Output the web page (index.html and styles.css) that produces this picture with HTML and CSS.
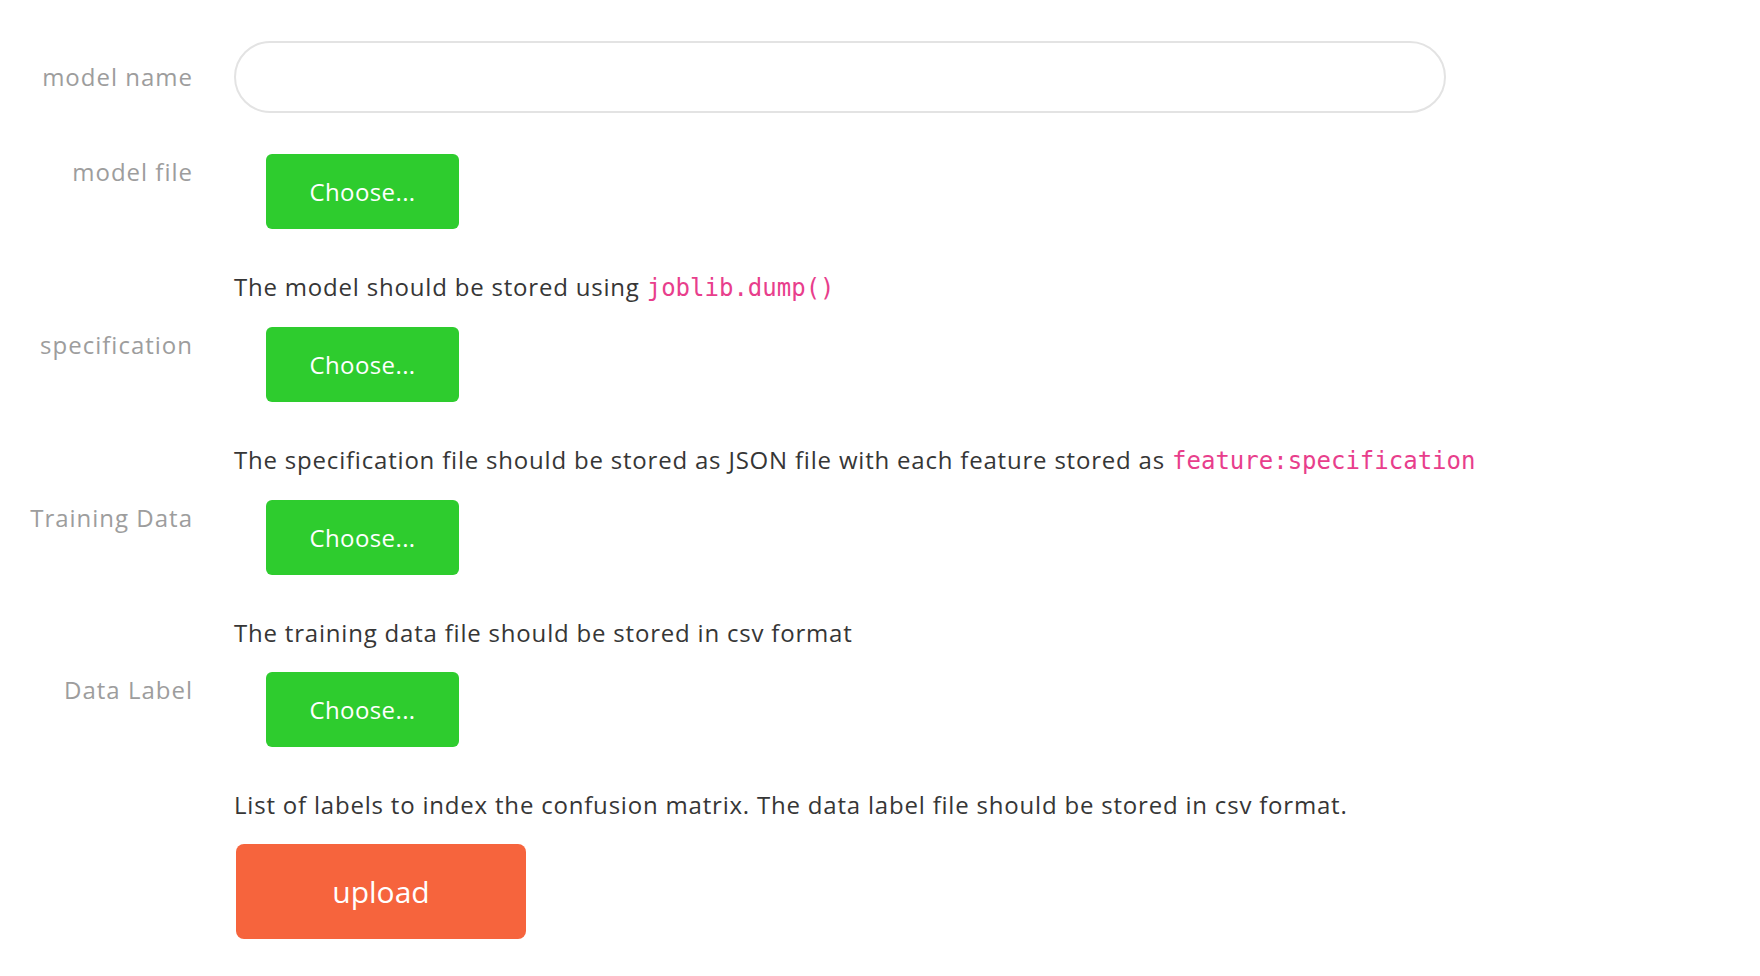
FILE: index.html
```html
<!DOCTYPE html>
<html lang="en">
<head>
<meta charset="utf-8">
<title>Upload model</title>
<link rel="stylesheet" href="styles.css">
</head>
<body>
<form class="form">
  <div class="field field-first">
    <div class="field-label label-center">model name</div>
    <div class="field-body">
      <input class="text-input" type="text">
    </div>
  </div>

  <div class="field">
    <div class="field-label">model file</div>
    <div class="field-body">
      <label class="file-btn"><input class="file-input" type="file">Choose...</label>
      <p class="help">The model should be stored using <code>joblib.dump()</code></p>
    </div>
  </div>

  <div class="field">
    <div class="field-label">specification</div>
    <div class="field-body">
      <label class="file-btn"><input class="file-input" type="file">Choose...</label>
      <p class="help">The specification file should be stored as JSON file with each feature stored as <code>feature:specification</code></p>
    </div>
  </div>

  <div class="field">
    <div class="field-label">Training Data</div>
    <div class="field-body">
      <label class="file-btn"><input class="file-input" type="file">Choose...</label>
      <p class="help">The training data file should be stored in csv format</p>
    </div>
  </div>

  <div class="field">
    <div class="field-label">Data Label</div>
    <div class="field-body">
      <label class="file-btn"><input class="file-input" type="file">Choose...</label>
      <p class="help">List of labels to index the confusion matrix. The data label file should be stored in csv format.</p>
    </div>
  </div>

  <div class="field">
    <div class="field-label"></div>
    <div class="field-body">
      <button class="upload-btn" type="button">upload</button>
    </div>
  </div>
</form>
</body>
</html>
```

FILE: styles.css
```css
* { box-sizing: border-box; }

html, body {
  margin: 0;
  padding: 0;
  background: #ffffff;
}

body {
  font-family: "Open Sans", "Liberation Sans", sans-serif;
  font-size: 24px;
  color: #363636;
}

.form {
  padding-top: 41px;
}

.field {
  display: flex;
  gap: 41px;
  margin-bottom: 21px;
}

.field-first {
  margin-bottom: 41px;
  align-items: center;
}

.field-label {
  flex: 0 0 193px;
  text-align: right;
  color: #9d9d9d;
  line-height: 36px;
  white-space: nowrap;
  letter-spacing: 1px;
}

.field-body {
  display: flex;
  flex-direction: column;
  align-items: flex-start;
}

.text-input {
  width: 1212px;
  height: 72px;
  border: 2px solid #e3e3e3;
  border-radius: 36px;
  padding: 0 30px;
  font: inherit;
  outline: none;
  background: #fff;
}

.file-input {
  display: none;
}

.file-btn {
  display: flex;
  align-items: center;
  justify-content: center;
  width: 193px;
  height: 75px;
  margin-left: 32px;
  background: #2ecc2e;
  color: #ffffff;
  border-radius: 6px;
  letter-spacing: 0.4px;
  cursor: pointer;
}

.help {
  margin: 40px 0 0 0;
  line-height: 36px;
  color: #363636;
  letter-spacing: 0.8px;
}

code {
  font-family: "DejaVu Sans Mono", monospace;
  font-size: 24px;
  letter-spacing: 0;
  color: #e83e8c;
}

.upload-btn {
  width: 290px;
  height: 95px;
  margin-left: 2px;
  border: none;
  border-radius: 8px;
  background: #f6643d;
  color: #ffffff;
  font-family: "Open Sans", "Liberation Sans", sans-serif;
  font-size: 30px;
  cursor: pointer;
}
```
